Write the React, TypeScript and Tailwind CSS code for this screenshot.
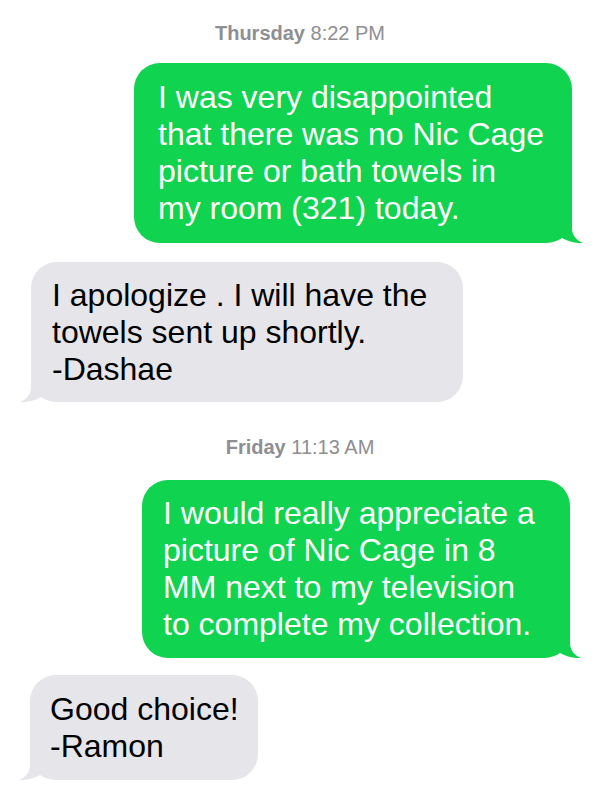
import React from "react";

type Msg =
  | { kind: "time"; day: string; time: string; cls: string }
  | { kind: "out" | "in"; lines: string[]; cls: string };

const thread: Msg[] = [
  { kind: "time", day: "Thursday", time: "8:22 PM", cls: "pt-[21px]" },
  {
    kind: "out",
    lines: [
      "I was very disappointed",
      "that there was no Nic Cage",
      "picture or bath towels in",
      "my room (321) today.",
    ],
    cls: "mt-[18px] w-[438px] mr-[28px] pl-[24px] pt-[16px] pb-[16px]",
  },
  {
    kind: "in",
    lines: ["I apologize . I will have the", "towels sent up shortly.", "-Dashae"],
    cls: "mt-[19px] w-[432px] ml-[31px] pl-[21px] pt-[15px] pb-[14px]",
  },
  { kind: "time", day: "Friday", time: "11:13 AM", cls: "mt-[33px]" },
  {
    kind: "out",
    lines: [
      "I would really appreciate a",
      "picture of Nic Cage in 8",
      "MM next to my television",
      "to complete my collection.",
    ],
    cls: "mt-[21px] w-[428px] mr-[30px] pl-[21px] pt-[15px] pb-[15px]",
  },
  {
    kind: "in",
    lines: ["Good choice!", "-Ramon"],
    cls: "mt-[17px] w-[228px] ml-[30px] pl-[20px] pt-[16px] pb-[15px]",
  },
];

function Tail({ side }: { side: "out" | "in" }) {
  // iOS 7 style hooked tail, drawn for the right side and mirrored for the left
  return (
    <svg
      width="41"
      height="30"
      viewBox="0 0 41 30"
      className={
        side === "out"
          ? "absolute bottom-0 right-[-11px] fill-[#10d34f]"
          : "absolute bottom-0 left-[-11px] -scale-x-100 fill-[#e5e5ea]"
      }
    >
      <path d="M0 0 H30 V15 C30 22 34 27 41 30 C35 30.5 27 29 20 25 C15 28 10 29 4 29 H0 Z" />
    </svg>
  );
}

export default function App() {
  return (
    <div
      className="w-[600px] h-[787px] bg-white flex flex-col overflow-hidden"
      style={{ fontFamily: '"Liberation Sans", Arial, sans-serif' }}
    >
      {thread.map((m, i) =>
        m.kind === "time" ? (
          <div key={i} className={`text-center text-[20px] leading-[24px] text-[#8e8e93] ${m.cls}`}>
            <span className="font-bold">{m.day}</span> {m.time}
          </div>
        ) : (
          <div
            key={i}
            className={`relative rounded-[26px] text-[32px] leading-[37px] whitespace-nowrap ${
              m.kind === "out" ? "self-end bg-[#10d34f] text-white" : "self-start bg-[#e5e5ea] text-black"
            } ${m.cls}`}
          >
            {m.lines.map((l, j) => (
              <div key={j} className="relative z-10">
                {l}
              </div>
            ))}
            <Tail side={m.kind} />
          </div>
        )
      )}
    </div>
  );
}
